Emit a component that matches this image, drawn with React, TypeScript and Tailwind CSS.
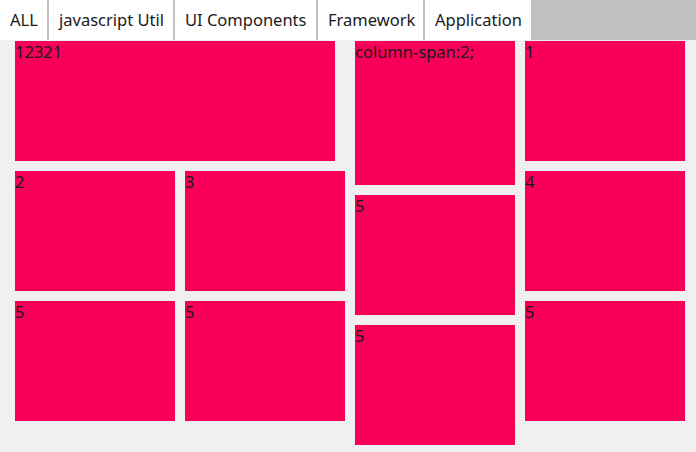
const tabs = [
  { label: 'ALL', w: 'w-[47px]' },
  { label: 'javascript Util', w: 'w-[124px]' },
  { label: 'UI Components', w: 'w-[141px]' },
  { label: 'Framework', w: 'w-[105px]' },
  { label: 'Application', w: 'w-[106px]' },
];

function Box({ label, className }: { label?: string; className: string }) {
  return (
    <div className={`bg-[#f8005a] text-[#1a1a1a] text-[16.5px] leading-[22px] ${className}`}>
      {label}
    </div>
  );
}

export default function App() {
  return (
    <div
      className="h-[452px] w-[696px] bg-[#f0f0f0] overflow-hidden"
      style={{ fontFamily: '"Noto Sans", "Open Sans", sans-serif' }}
    >
      {/* filter tabs */}
      <nav className="flex h-[40px] bg-[#c0c0c0] gap-[2px]">
        {tabs.map((t) => (
          <div
            key={t.label}
            className={`${t.w} h-full bg-white pl-[10px] flex items-center text-[16.5px] text-[#1a1a1a] whitespace-nowrap`}
          >
            {t.label}
          </div>
        ))}
      </nav>

      {/* masonry grid */}
      <div className="flex gap-[10px] pl-[15px] pt-[1px]">
        <div className="flex flex-col gap-[10px] w-[330px]">
          <Box label="12321" className="w-[320px] h-[120px]" />
          <div className="flex gap-[10px]">
            <Box label="2" className="w-[160px] h-[120px]" />
            <Box label="3" className="w-[160px] h-[120px]" />
          </div>
          <div className="flex gap-[10px]">
            <Box label="5" className="w-[160px] h-[120px]" />
            <Box label="5" className="w-[160px] h-[120px]" />
          </div>
        </div>
        <div className="flex flex-col gap-[10px] w-[160px]">
          <Box label="column-span:2;" className="h-[144px]" />
          <Box label="5" className="h-[120px]" />
          <Box label="5" className="h-[120px]" />
        </div>
        <div className="flex flex-col gap-[10px] w-[160px]">
          <Box label="1" className="h-[120px]" />
          <Box label="4" className="h-[120px]" />
          <Box label="5" className="h-[120px]" />
        </div>
      </div>
    </div>
  );
}
